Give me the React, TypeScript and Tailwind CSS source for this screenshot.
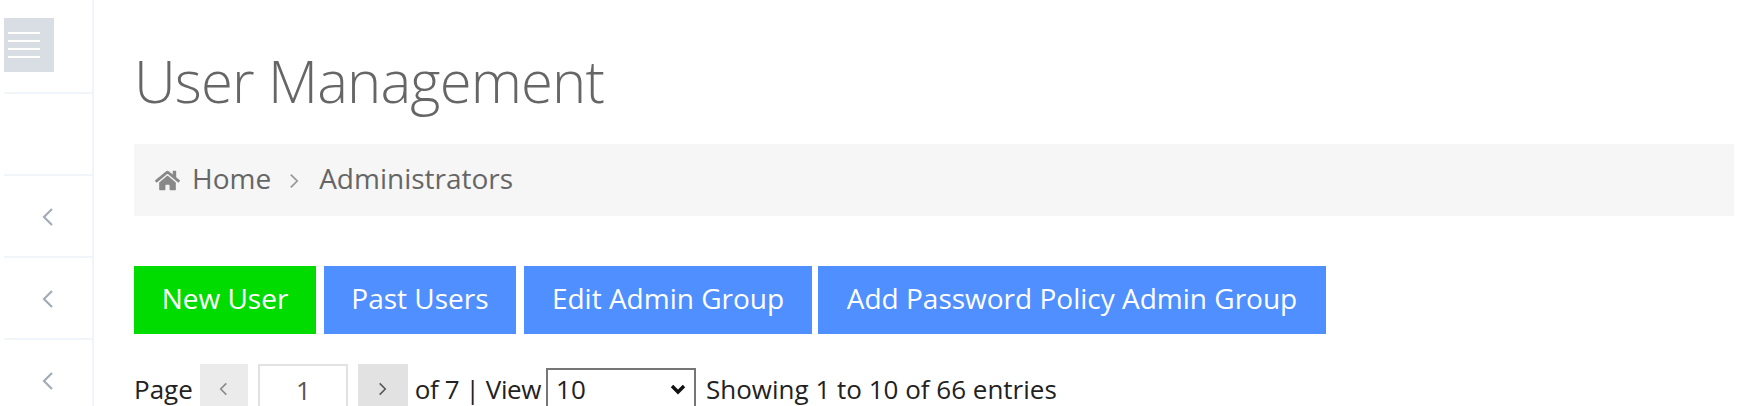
import { FaHome } from 'react-icons/fa'

const buttons = [
  { label: 'New User', className: 'w-[182px] bg-[#00dc00]' },
  { label: 'Past Users', className: 'ml-[8px] w-[192px] bg-[#4f8fff]' },
  { label: 'Edit Admin Group', className: 'ml-[8px] w-[288px] bg-[#4f8fff]' },
  { label: 'Add Password Policy Admin Group', className: 'ml-[6px] w-[508px] bg-[#4f8fff]' },
]

function Chevron({ dir, className }: { dir: 'left' | 'right'; className: string }) {
  return (
    <svg viewBox="0 0 12 20" className={className} fill="none" stroke="currentColor" strokeWidth="2.2">
      <path d={dir === 'left' ? 'M10 2L2 10l8 8' : 'M2 2l8 8-8 8'} />
    </svg>
  )
}

function SideRow() {
  return (
    <div className="flex h-[82px] items-center justify-center border-b-2 border-[#f1f5f9] pt-[2px] text-[#a3abb5]">
      <Chevron dir="left" className="h-[20px] w-[12px]" />
    </div>
  )
}

export default function App() {
  return (
    <div className="flex h-[406px] overflow-hidden bg-white font-['Open_Sans',sans-serif]">
      <aside className="ml-[4px] w-[90px] shrink-0 border-r-2 border-[#f1f5f9]">
        <div className="h-[94px] border-b-2 border-[#f1f5f9] pt-[18px]">
          <div className="flex h-[54px] w-[50px] flex-col justify-center gap-[6px] bg-[#d9dee5] pl-[4px]">
            <div className="h-[2px] w-[32px] bg-white" />
            <div className="h-[2px] w-[32px] bg-white" />
            <div className="h-[2px] w-[32px] bg-white" />
            <div className="h-[2px] w-[32px] bg-white" />
          </div>
        </div>
        <div className="h-[82px] border-b-2 border-[#f1f5f9]" />
        <SideRow />
        <SideRow />
        <SideRow />
      </aside>
      <main className="min-w-0 flex-1 pl-[40px] pr-[4px]">
        <h1 className="mt-[41px] h-[103px] text-[58px] leading-[80px] font-light tracking-[-0.85px] text-[#666666]">User Management</h1>
        <div className="flex h-[72px] items-center bg-[#f6f6f6] pb-[4px] pl-[21px] text-[28px] text-[#666666]">
          <FaHome size={25} className="mt-[4px] mr-[12px] text-[#888888]" />
          <span>Home</span>
          <Chevron dir="right" className="mt-[6px] mr-[20px] ml-[18px] h-[16px] w-[10px] text-[#999999]" />
          <span>Administrators</span>
        </div>
        <div className="mt-[50px] flex">
          {buttons.map((b) => (
            <button key={b.label} className={`h-[68px] pb-[4px] text-[28px] text-white ${b.className}`}>
              {b.label}
            </button>
          ))}
        </div>
        <div className="mt-[30px] flex h-[42px] items-start text-[26px] leading-[36px] text-[#222222]">
          <span className="mt-[7px] mr-[7px]">Page</span>
          <div className="flex h-[42px] w-[48px] items-center justify-center bg-[#ebebeb] pt-[8px] text-[#888888]">
            <Chevron dir="left" className="h-[14px] w-[9px]" />
          </div>
          <div className="mx-[10px] h-[42px] w-[90px] border-2 border-b-0 border-[#e2e2e2] pt-[10px] pl-[1px] text-center leading-[28px] text-[#555555]">1</div>
          <div className="flex h-[42px] w-[50px] items-center justify-center bg-[#e2e2e2] pt-[8px] text-[#555555]">
            <Chevron dir="right" className="h-[14px] w-[9px]" />
          </div>
          <span className="mt-[7px] ml-[7px] tracking-[-0.4px]">of 7 | View</span>
          <div className="mt-[4px] ml-[5px] flex h-[38px] w-[150px] items-start justify-between border-2 border-b-0 border-[#767676] px-[8px] pt-[1px]">
            <span>10</span>
            <svg viewBox="0 0 16 16" className="mt-[10px] h-[16px] w-[16px]" fill="none" stroke="#111111" strokeWidth="3.4">
              <path d="M2 5l6 6 6-6" />
            </svg>
          </div>
          <span className="mt-[7px] ml-[10px]">Showing 1 to 10 of 66 entries</span>
        </div>
      </main>
    </div>
  )
}
